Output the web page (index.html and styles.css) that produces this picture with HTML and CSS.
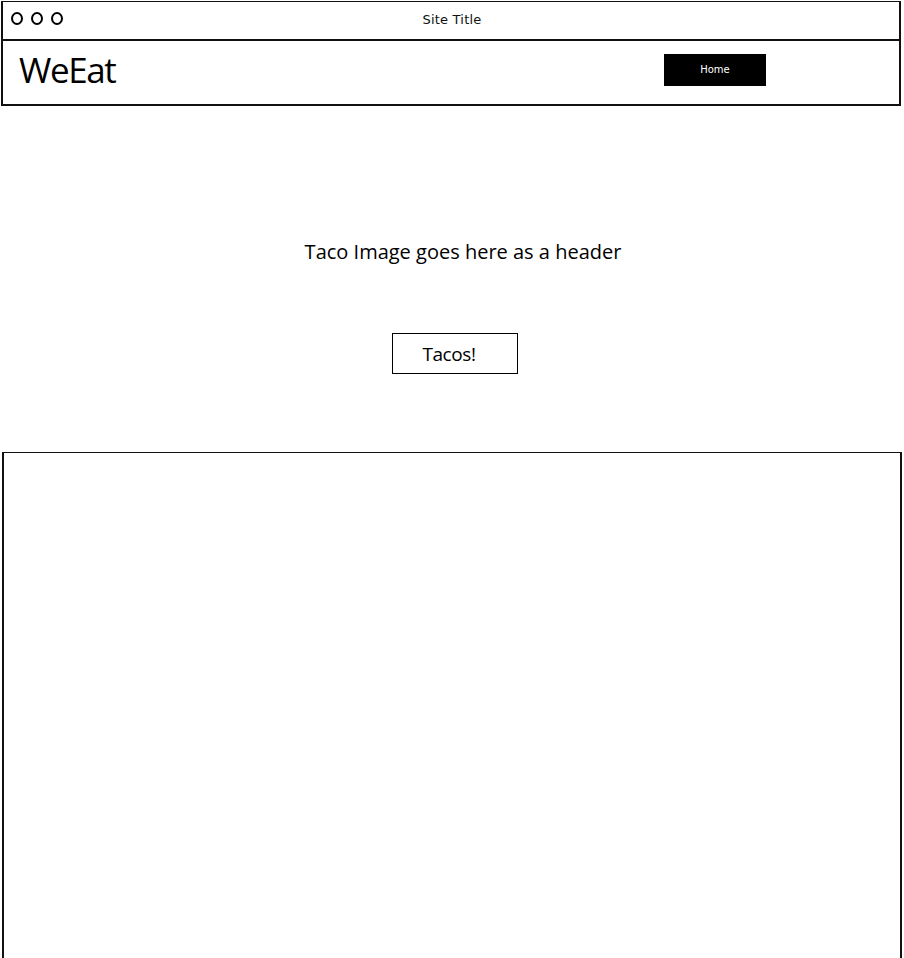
FILE: index.html
```html
<!DOCTYPE html>
<html lang="en">
<head>
<meta charset="utf-8">
<title>WeEat</title>
<link rel="stylesheet" href="styles.css">
</head>
<body>
<div class="window">
  <div class="titlebar">
    <div class="dots">
      <span class="dot"></span><span class="dot"></span><span class="dot"></span>
    </div>
    <div class="site-title">Site Title</div>
  </div>
  <div class="navbar">
    <div class="brand">WeEat</div>
    <a class="home-btn" href="#">Home</a>
  </div>
</div>
<section class="hero">
  <p class="hero-text">Taco Image goes here as a header</p>
  <button class="tacos-btn" type="button">Tacos!</button>
</section>
<section class="content"></section>
</body>
</html>
```

FILE: styles.css
```css
html, body {
  margin: 0;
  padding: 0;
  background: #fff;
  color: #000;
  font-family: "Open Sans", "Noto Sans", sans-serif;
  overflow: hidden;
}

body {
  height: 958px;
}

.window {
  margin: 1px 3px 0 1px;
  border: 2px solid #111;
  border-top-width: 1px;
  box-sizing: border-box;
  height: 105px;
  display: flex;
  flex-direction: column;
}

.titlebar {
  height: 37px;
  border-bottom: 2px solid #111;
  position: relative;
  display: flex;
  align-items: center;
  justify-content: center;
}

.dots {
  position: absolute;
  left: 8px;
  top: 10px;
  display: flex;
  gap: 8px;
}

.dot {
  width: 8px;
  height: 9px;
  border: 2px solid #000;
  border-radius: 50%;
}

.site-title {
  font-family: "DejaVu Sans", sans-serif;
  font-size: 13px;
  letter-spacing: 0.2px;
  margin: -3px 0 0 2px;
  color: #111;
}

.navbar {
  flex: 1;
  display: flex;
  align-items: center;
  padding: 0 0 0 16px;
  position: relative;
}

.brand {
  font-size: 35px;
  letter-spacing: -1.4px;
  line-height: 1;
  margin-top: -6px;
}

.home-btn {
  margin-left: auto;
  margin-right: 133px;
  margin-top: -6px;
  width: 102px;
  height: 32px;
  background: #000;
  color: #fff;
  font-family: "DejaVu Sans", sans-serif;
  font-size: 10px;
  text-decoration: none;
  display: flex;
  align-items: center;
  justify-content: center;
}

.hero {
  height: 346px;
  display: flex;
  flex-direction: column;
  align-items: center;
  box-sizing: border-box;
  padding-top: 132px;
}

.hero-text {
  margin: 0 0 0 22px;
  font-size: 20px;
  letter-spacing: 0;
  line-height: 28px;
}

.tacos-btn {
  margin-top: 67px;
  margin-left: 6px;
  width: 126px;
  height: 41px;
  border: 1.5px solid #000;
  background: #fff;
  color: #000;
  font-family: "Open Sans", "Noto Sans", sans-serif;
  font-size: 19px;
  letter-spacing: -0.4px;
  padding: 0 12px 0 0;
}

.content {
  margin: 0 2px 0 2px;
  height: 507px;
  border: 2px solid #111;
  border-top-width: 1.5px;
  border-bottom: none;
  box-sizing: border-box;
}
```
